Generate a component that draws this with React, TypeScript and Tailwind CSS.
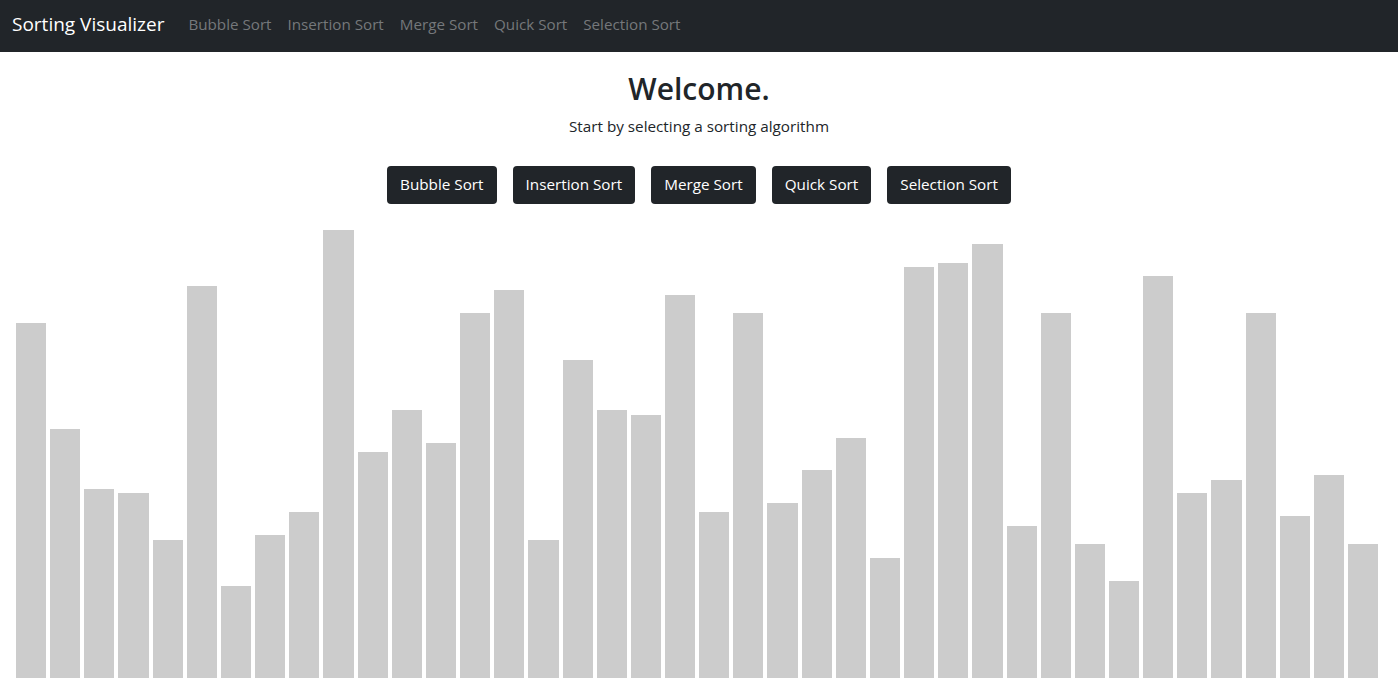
const algorithms = ["Bubble Sort", "Insertion Sort", "Merge Sort", "Quick Sort", "Selection Sort"];

const bars = [
  355, 249, 189, 185, 138, 392, 92, 143, 166, 448, 226, 268, 235, 365, 388, 138, 318, 268, 263, 383,
  166, 365, 175, 208, 240, 120, 411, 415, 434, 152, 365, 134, 97, 402, 185, 198, 365, 162, 203, 134,
];

function Navbar() {
  return (
    <nav className="h-[52px] bg-[#212529] flex items-center px-3 pb-[3px]">
      <a href="#" className="text-[19px] text-white mr-4 leading-none">
        Sorting Visualizer
      </a>
      <div className="flex items-center">
        {algorithms.map((name) => (
          <a key={name} href="#" className="px-2 text-[15.2px] text-[#75787b] leading-none">
            {name}
          </a>
        ))}
      </div>
    </nav>
  );
}

export default function App() {
  return (
    <div
      className="h-[691px] flex flex-col bg-white text-[#212529] overflow-hidden"
      style={{ fontFamily: '"Open Sans", "Noto Sans", sans-serif' }}
    >
      <Navbar />
      <div className="flex flex-col items-center pt-[19px]">
        <h2 className="text-[30px] font-semibold leading-[1.2]">Welcome.</h2>
        <p className="text-[15.25px] mt-[8px]">Start by selecting a sorting algorithm</p>
        <div className="flex gap-4 mt-[28px]">
          {algorithms.map((name) => (
            <button
              key={name}
              className="h-[38px] px-[13px] rounded bg-[#212529] text-white text-[15.25px]"
            >
              {name}
            </button>
          ))}
        </div>
      </div>
      <div className="flex-1 flex items-end gap-1 pl-4 pr-5 pb-[13px]">
        {bars.map((h, i) => (
          <div key={i} className="flex-1 bg-[#cccccc]" style={{ height: h }} />
        ))}
      </div>
    </div>
  );
}
